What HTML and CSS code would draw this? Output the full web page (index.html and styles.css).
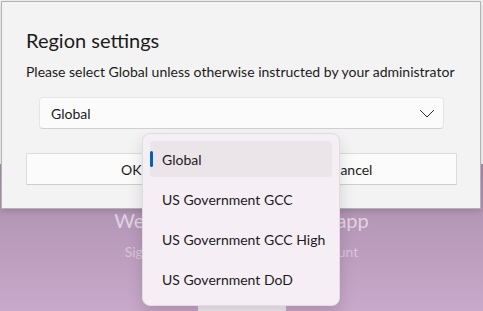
FILE: index.html
```html
<!DOCTYPE html>
<html lang="en">
<head>
    <meta charset="UTF-8">
    <meta name="viewport" content="width=device-width, initial-scale=1.0">
    <title>Region settings</title>
    <link rel="stylesheet" href="styles.css">
</head>

<body>
    <div class="app">
        <div class="top-area"></div>
        <div class="hero">
            <div class="hero-title">Welcome to the Outlook app</div>
            <div class="hero-text">Sign in with your organization account</div>
            <div class="hero-button"></div>
        </div>
    </div>

    <div class="dialog">
        <div class="dialog-title">Region settings</div>
        <div class="dialog-text">Please select Global unless otherwise instructed by your administrator</div>
        <div class="select">
            <span>Global</span>
            <svg class="chevron" width="16" height="9" viewBox="0 0 16 9">
                <path d="M1 1 L8 8 L15 1" fill="none" stroke="#2b2b2b" stroke-width="1"/>
            </svg>
        </div>
        <div class="dialog-buttons">
            <button class="btn">OK</button>
            <button class="btn">Cancel</button>
        </div>
    </div>

    <div class="popup">
        <div class="option selected">Global</div>
        <div class="option">US Government GCC</div>
        <div class="option">US Government GCC High</div>
        <div class="option">US Government DoD</div>
    </div>
</body>
</html>
```

FILE: styles.css
```css
* {
    box-sizing: border-box;
}

body {
    margin: 0;
    width: 483px;
    height: 311px;
    overflow: hidden;
    position: relative;
    font-family: 'Segoe UI', 'Lato', 'Liberation Sans', sans-serif;
    color: #1b1b1b;
    background-color: #f3f3f3;
}

.app {
    height: 311px;
    display: flex;
    flex-direction: column;
}

.top-area {
    flex-shrink: 0;
    height: 164px;
    background-color: #f3f3f3;
}

.hero {
    flex: 1;
    min-height: 0;
    overflow: hidden;
    display: flex;
    flex-direction: column;
    align-items: center;
    padding-top: 44px;
    background: linear-gradient(to bottom, #a98cab, #c9a9cb);
}

.hero-title {
    flex-shrink: 0;
    font-size: 20px;
    line-height: 24px;
    color: #e2d3e3;
}

.hero-text {
    flex-shrink: 0;
    margin-top: 11px;
    font-size: 14px;
    line-height: 17px;
    color: #d9c6da;
}

.hero-button {
    flex-shrink: 0;
    margin-top: 40px;
    width: 88px;
    height: 32px;
    border-radius: 4px;
    background-color: #f4eef4;
}

.dialog {
    position: absolute;
    left: 1px;
    top: 1px;
    width: 480px;
    height: 208px;
    padding: 24px 23px 0 24px;
    background-color: #f3f3f3;
    border: 1px solid #b3b3b3;
    box-shadow: 0 2px 6px rgba(0, 0, 0, 0.15);
}

.dialog-title {
    font-size: 20px;
    line-height: 28px;
}

.dialog-text {
    margin-top: 8px;
    font-size: 14px;
    line-height: 20px;
}

.select {
    margin: 15px 13px 0 13px;
    height: 32px;
    display: flex;
    align-items: center;
    justify-content: space-between;
    padding: 0 8px 0 11px;
    font-size: 14px;
    background-color: #fbfbfb;
    border: 1px solid #e5e5e5;
    border-bottom-color: #d0d0d0;
    border-radius: 4px;
}

.dialog-buttons {
    margin-top: 24px;
    display: grid;
    grid-template-columns: 1fr 1fr;
    gap: 10px;
}

.btn {
    height: 32px;
    font-family: inherit;
    font-size: 14px;
    color: #1b1b1b;
    background-color: #fbfbfb;
    border: 1px solid #dcdcdc;
    border-bottom-color: #cfcfcf;
}

.popup {
    position: absolute;
    left: 142px;
    top: 133px;
    width: 198px;
    height: 173px;
    padding: 7px;
    display: flex;
    flex-direction: column;
    gap: 4px;
    background-color: #f6eef5;
    border: 1px solid #e2dbe1;
    border-radius: 8px;
    box-shadow: 0 8px 16px rgba(0, 0, 0, 0.14);
}

.option {
    position: relative;
    height: 36px;
    display: flex;
    align-items: center;
    padding-left: 12px;
    font-size: 14px;
    border-radius: 4px;
}

.option.selected {
    background-color: #ebe5ea;
}

.option.selected::before {
    content: "";
    position: absolute;
    left: 0;
    top: 10px;
    width: 3px;
    height: 16px;
    border-radius: 2px;
    background-color: #005fb8;
}
```
